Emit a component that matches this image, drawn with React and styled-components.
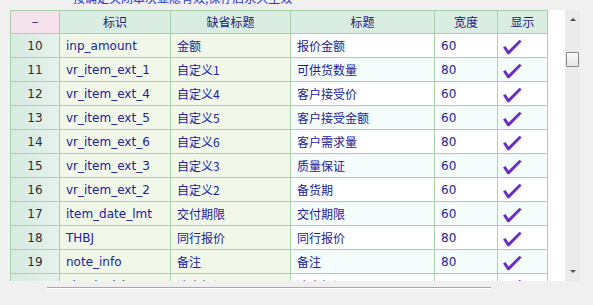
import React from "react";
import styled, { createGlobalStyle } from "styled-components";

const GlobalStyle = createGlobalStyle`
  html, body {
    margin: 0;
    padding: 0;
    background: #f0f0f0;
  }
  body {
    font-family: "DejaVu Sans", "Noto Sans CJK SC", sans-serif;
  }
`;

const rows = [
  { no: 10, id: "inp_amount", def: "金额", title: "报价金额", width: 60 },
  { no: 11, id: "vr_item_ext_1", def: "自定义1", title: "可供货数量", width: 80 },
  { no: 12, id: "vr_item_ext_4", def: "自定义4", title: "客户接受价", width: 60 },
  { no: 13, id: "vr_item_ext_5", def: "自定义5", title: "客户接受金额", width: 60 },
  { no: 14, id: "vr_item_ext_6", def: "自定义6", title: "客户需求量", width: 80 },
  { no: 15, id: "vr_item_ext_3", def: "自定义3", title: "质量保证", width: 60 },
  { no: 16, id: "vr_item_ext_2", def: "自定义2", title: "备货期", width: 60 },
  { no: 17, id: "item_date_lmt", def: "交付期限", title: "交付期限", width: 60 },
  { no: 18, id: "THBJ", def: "同行报价", title: "同行报价", width: 80 },
  { no: 19, id: "note_info", def: "备注", title: "备注", width: 80 },
  { no: 20, id: "checked_item_nat", def: "选中标记", title: "选中标记", width: 60 },
];

const Page = styled.div`
  width: 593px;
  height: 305px;
  overflow: hidden;
  display: flex;
  flex-direction: column;
`;

const Hint = styled.div`
  height: 10px;
  overflow: hidden;
  display: flex;
  align-items: flex-end;
  padding-left: 73px;
`;

const HintText = styled.span`
  font-family: "Noto Sans CJK SC", sans-serif;
  font-size: 12px;
  line-height: 12px;
  color: #2b35d0;
  margin-bottom: 6px;
  white-space: nowrap;
`;

const Body = styled.div`
  display: flex;
  padding-left: 10px;
  height: 271px;
`;

const Viewport = styled.div`
  width: 555px;
  height: 271px;
  background: #ffffff;
  overflow: hidden;
`;

const Table = styled.table`
  width: 538px;
  border-collapse: collapse;
  table-layout: fixed;
  font-size: 12px;
  line-height: 14px;
`;

const Head = styled.th`
  height: 22px;
  padding: 0;
  border: 1px solid #a9d1a9;
  background: ${(p) => (p.$pink ? "#f6e2ea" : "#d9ede2")};
  color: #1c1c7a;
  font-family: "Noto Sans CJK SC", sans-serif;
  font-weight: normal;
  font-size: 12px;
  line-height: 14px;
  text-align: center;
`;

const Cell = styled.td`
  box-sizing: border-box;
  height: 24px;
  padding: 0 0 0 ${(p) => (p.$center ? 0 : 6)}px;
  border: 1px solid #a9d1a9;
  background: ${(p) => p.$bg};
  color: ${(p) => (p.$num ? "#2e2e2e" : "#20209c")};
  text-align: ${(p) => (p.$center ? "center" : "left")};
  white-space: nowrap;
  overflow: hidden;
  font-family: ${(p) =>
    p.$cjk ? '"Noto Sans CJK SC", sans-serif' : '"DejaVu Sans", sans-serif'};
  font-size: 12px;
  line-height: 14px;
`;

const CheckCell = styled(Cell)`
  padding: 2px 0 0 4px;
  line-height: 0;
`;

const Scrollbar = styled.div`
  width: 15px;
  height: 271px;
  background: #ebebeb;
  display: flex;
  flex-direction: column;
  align-items: center;
`;

const Arrow = styled.div`
  width: 0;
  height: 0;
  border-left: 3px solid transparent;
  border-right: 3px solid transparent;
  ${(p) =>
    p.$down
      ? "border-top: 3px solid #505050;"
      : "border-bottom: 3px solid #505050;"}
  margin: ${(p) => (p.$down ? "auto 0 8px" : "8px 0 0")};
`;

const Thumb = styled.div`
  width: 11px;
  height: 13px;
  margin-top: 31px;
  border: 1px solid #8a8a8a;
  border-radius: 1px;
  background: linear-gradient(#fafafa, #e6e6e6);
`;

const Footer = styled.div`
  padding: 6px 0 0 47px;
`;

const Divider = styled.div`
  width: 444px;
  height: 1px;
  background: #a8a8a8;
  border-bottom: 1px solid #ffffff;
`;

const Check = () => (
  <svg width="20" height="16" viewBox="0 0 20 16">
    <path
      d="M1 8.5 L3.4 7 L6.6 11.4 L17.6 0.8 L19.6 2.4 L7.2 15.2 L5.6 15.2 Z"
      fill="#6a2cc0"
    />
  </svg>
);

const App = () => {
  return (
    <Page>
      <GlobalStyle />
      <Hint>
        <HintText>按确定关闭本次显隐有效,保存后永久生效</HintText>
      </Hint>
      <Body>
        <Viewport>
          <Table>
            <colgroup>
              <col style={{ width: 49 }} />
              <col style={{ width: 111 }} />
              <col style={{ width: 120 }} />
              <col style={{ width: 144 }} />
              <col style={{ width: 63 }} />
              <col style={{ width: 50 }} />
            </colgroup>
            <thead>
              <tr>
                <Head $pink>−</Head>
                <Head>标识</Head>
                <Head>缺省标题</Head>
                <Head>标题</Head>
                <Head>宽度</Head>
                <Head>显示</Head>
              </tr>
            </thead>
            <tbody>
              {rows.map((r, i) => {
                const alt = i % 2 === 1 ? "#f4fdfc" : "#ffffff";
                return (
                  <tr key={r.no}>
                    <Cell $center $num $bg="linear-gradient(90deg,#d6ebe0,#e6f2ec)">
                      {r.no}
                    </Cell>
                    <Cell $bg="#f1f8ea">{r.id}</Cell>
                    <Cell $cjk $bg="#f1f8ea">{r.def}</Cell>
                    <Cell $cjk $bg={alt}>{r.title}</Cell>
                    <Cell $bg={alt}>{r.width}</Cell>
                    <CheckCell $bg={alt}>
                      <Check />
                    </CheckCell>
                  </tr>
                );
              })}
            </tbody>
          </Table>
        </Viewport>
        <Scrollbar>
          <Arrow />
          <Thumb />
          <Arrow $down />
        </Scrollbar>
      </Body>
      <Footer>
        <Divider />
      </Footer>
    </Page>
  );
};

export default App;
